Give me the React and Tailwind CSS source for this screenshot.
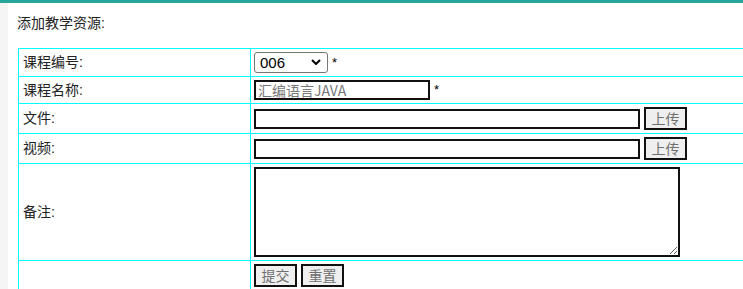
import { useState } from 'react';

const sans = "font-['Liberation_Sans','Noto_Sans_CJK_SC',sans-serif]";

const Row = ({ label, height, children, top = false }) => (
  <div className={`flex border-b border-[#00ffff] ${height}`}>
    <div className="flex w-[232px] flex-none items-center border-r border-[#00ffff] pl-1 text-[14px] text-[#222]">
      {label}
    </div>
    <div className={`flex flex-1 pl-[3px] ${top ? 'items-start pt-[3px]' : 'items-center'}`}>{children}</div>
  </div>
);

const UploadButton = () => (
  <button
    type="button"
    className="ml-1 h-[23px] w-[43px] border-2 border-[#111] bg-[#efefef] text-[14px] leading-none text-[#6f6f6f]"
  >
    上传
  </button>
);

const App = () => {
  const [courseNo, setCourseNo] = useState('006');

  return (
    <div className={`flex h-[289px] w-[743px] flex-col overflow-hidden bg-white ${sans}`}>
      <div className="h-[3px] flex-none bg-[#26a69a]" />
      <div className="flex flex-1">
        <div className="w-2 flex-none bg-[#f5f5f5]" />
        <div className="flex-1 pl-[9px]">
          <p className="pt-[10px] text-[14px] leading-[20px] text-[#222]">添加教学资源:</p>

          <div className="mt-[15px] ml-px w-[760px] border-l border-t border-[#00ffff]">
            <Row label="课程编号:" height="h-[28px]">
              <div className="relative">
                <select
                  value={courseNo}
                  onChange={(e) => setCourseNo(e.target.value)}
                  className="h-[21px] w-[74px] appearance-none rounded-[3px] border border-[#767676] bg-white pl-[5px] text-[15px] leading-none text-black"
                >
                  <option value="001">001</option>
                  <option value="006">006</option>
                </select>
                <svg
                  className="pointer-events-none absolute right-[7px] top-[8px]"
                  width="10"
                  height="6"
                  viewBox="0 0 10 6"
                  fill="none"
                  stroke="#000"
                  strokeWidth="2"
                >
                  <path d="M1 1l4 4 4-4" />
                </svg>
              </div>
              <span className="ml-1 text-[13px]">*</span>
            </Row>

            <Row label="课程名称:" height="h-[27px]">
              <input
                type="text"
                placeholder="汇编语言JAVA"
                className="h-[20px] w-[176px] border-2 border-[#111] px-[2px] font-['Noto_Sans_CJK_SC',sans-serif] text-[14px] placeholder:text-[#777]"
              />
              <span className="ml-1 text-[13px]">*</span>
            </Row>

            <Row label="文件:" height="h-[30px]">
              <input type="text" className="h-[20px] w-[386px] border-2 border-[#111] px-[2px] text-[14px]" />
              <UploadButton />
            </Row>

            <Row label="视频:" height="h-[30px]">
              <input type="text" className="h-[20px] w-[386px] border-2 border-[#111] px-[2px] text-[14px]" />
              <UploadButton />
            </Row>

            <Row label="备注:" height="h-[97px]">
              <textarea className="h-[90px] w-[426px] resize border-2 border-[#111] p-[2px] text-[14px]" />
            </Row>

            <Row label="" height="h-[30px]" top>
              <button
                type="button"
                className="h-[23px] w-[43px] border-2 border-[#111] bg-[#efefef] text-[14px] leading-none text-[#6f6f6f]"
              >
                提交
              </button>
              <button
                type="reset"
                className="ml-1 h-[23px] w-[43px] border-2 border-[#111] bg-[#efefef] text-[14px] leading-none text-[#6f6f6f]"
              >
                重置
              </button>
            </Row>
          </div>
        </div>
      </div>
    </div>
  );
};

export default App;
